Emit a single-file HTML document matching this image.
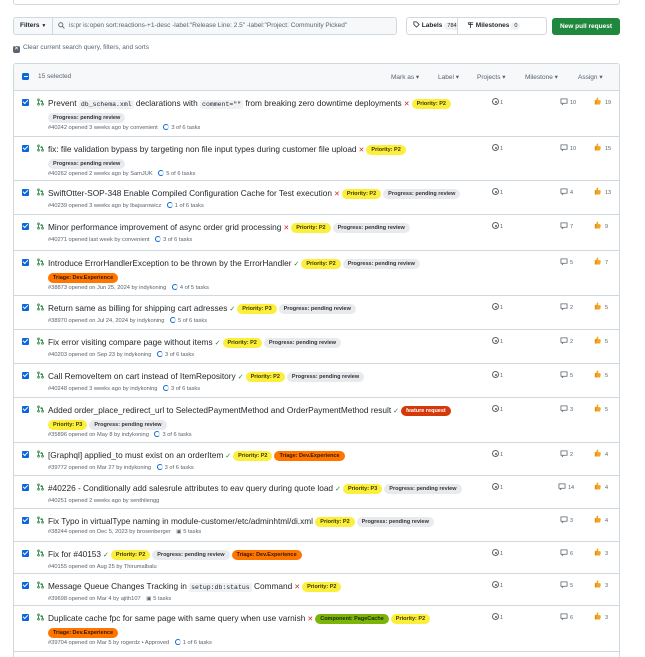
<!DOCTYPE html>
<html><head><meta charset="utf-8"><style>
*{box-sizing:border-box;margin:0;padding:0}
html,body{width:645px;height:657px;overflow:hidden}
body{background:#fff;font-family:"Liberation Sans",Arial,sans-serif;color:#1f2328;position:relative}
.topbox{position:absolute;left:13px;top:-10px;width:607px;height:15px;border:1px solid #d1d9e0;border-radius:3px}
.filters{position:absolute;left:13px;top:17px;height:18px;width:40px;border:1px solid #d1d9e0;border-radius:3px 0 0 3px;background:#f6f8fa;font-size:6.5px;font-weight:bold;line-height:16px;padding-left:6px}
.search{position:absolute;left:53px;top:17px;height:18px;width:344px;border:1px solid #d1d9e0;border-left:none;border-radius:0 3px 3px 0;background:#f6f8fa;font-size:6.5px;color:#59636e;line-height:16px;padding-left:16px;white-space:nowrap;overflow:hidden}
.btn{position:absolute;top:17px;height:18px;border:1px solid #d1d9e0;background:#fff;font-size:6.5px;font-weight:bold;line-height:16px;white-space:nowrap}
.cnt{display:inline-block;background:#eff1f3;border-radius:6px;padding:0 3px;font-size:5.5px;line-height:8px;font-weight:normal;margin-left:2px}
.npr{position:absolute;left:552px;top:18px;width:68px;height:17px;background:#1f883d;border-radius:3px;color:#fff;font-size:6.5px;font-weight:bold;line-height:17px;text-align:center}
.clear{position:absolute;left:13px;top:44px;font-size:6.5px;color:#59636e;line-height:8px}
.clear i{display:inline-block;width:7px;height:7px;background:#59636e;border-radius:2px;color:#fff;font-style:normal;font-size:6px;line-height:7px;text-align:center;vertical-align:-1px;margin-right:3px}
.box{position:absolute;left:13px;top:63px;width:607px;height:594px;border:1px solid #d1d9e0;border-bottom:none;border-radius:3px 3px 0 0;overflow:hidden}
.hdr{position:absolute;left:0;top:0;width:605px;height:27px;background:#f6f8fa;border-bottom:1px solid #d1d9e0}
.hdr .sel{position:absolute;left:24px;top:9px;font-size:6.5px;color:#59636e}
.hdr .mn{position:absolute;left:8px;top:9px;width:7px;height:7px;background:#0969da;border-radius:1.5px}
.hdr .mn:after{content:"";position:absolute;left:1.5px;top:3px;width:4px;height:1px;background:#fff}
.hi{position:absolute;top:9px;font-size:6.5px;color:#59636e;white-space:nowrap}
.row{position:absolute;left:0;width:605px;border-top:1px solid #d1d9e0}
.cb{position:absolute;left:8px;top:8px;width:6.5px;height:6.5px;background:#0969da;border-radius:1px}
.cb:after{content:"";position:absolute;left:1.2px;top:1.2px;width:3.5px;height:2px;border-left:1px solid #fff;border-bottom:1px solid #fff;transform:rotate(-45deg)}
.pr{position:absolute;left:23px;top:7px}
.t{position:absolute;left:34px;top:6px;white-space:nowrap;font-size:8.3px;line-height:12px}
code{font-family:"Liberation Mono",monospace;font-size:6.5px;background:#eff1f3;border-radius:2px;padding:1px 2px}
.x{color:#cf222e;font-size:7px;margin:0 2px}
.ok{color:#1a7f37;font-size:7px;margin:0 2px}
.l{display:inline-block;font-size:5.5px;font-weight:bold;line-height:10px;height:10px;padding:0 5px;border-radius:5px;vertical-align:1px;margin-right:2px}
.p{background:#fbef3c;color:#3b3500}
.g{background:#e8eaee;color:#333}
.o{background:#fe7600;color:#3a1400}
.fr{background:#d5390a;color:#fff}
.c{background:#7cb50a;color:#1c2a00}
.m{display:block;font-size:5.7px;color:#59636e;font-weight:normal;line-height:11px}
.tk{display:inline-block;width:6px;height:6px;border:1.2px solid #0969da;border-right-color:#c6d9f0;border-radius:50%;vertical-align:-1px;margin:0 2px 0 4px}
.iss{position:absolute;left:478px;top:7px;font-size:5.5px;color:#59636e}
.iss i{display:inline-block;width:7px;height:7px;border:1px solid #59636e;border-radius:50%;vertical-align:-1px;position:relative;margin-right:1px}
.iss i:after{content:"";position:absolute;left:1.5px;top:1.5px;width:2px;height:2px;background:#59636e;border-radius:50%}
.com{position:absolute;left:546px;top:7px;font-size:5.5px;color:#59636e}
.com svg{vertical-align:-1px;margin-right:2px}
.th{position:absolute;left:580px;top:6px;font-size:5.5px;color:#59636e}
.th svg{vertical-align:-1px;margin-right:4px}
</style></head><body>
<div class="topbox"></div>
<div class="filters">Filters <span style="font-size:5px">▼</span></div>
<div class="search"><svg style="position:absolute;left:5px;top:4px" width="7" height="7" viewBox="0 0 8 8"><circle cx="3.2" cy="3.2" r="2.4" fill="none" stroke="#59636e" stroke-width="1"/><path d="M5 5l2.3 2.3" stroke="#59636e" stroke-width="1"/></svg>is:pr is:open sort:reactions-+1-desc -label:"Release Line: 2.5" -label:"Project: Community Picked"</div>
<div class="btn" style="left:406px;width:52px;border-radius:3px 0 0 3px;padding-left:6px"><svg width="7" height="7" viewBox="0 0 8 8" style="vertical-align:-1px"><path d="M1 1h3l3 3-3 3-3-3z" fill="none" stroke="#1f2328" stroke-width=".9"/></svg> Labels<span class="cnt">784</span></div>
<div class="btn" style="left:457px;width:90px;border-radius:0 3px 3px 0;padding-left:9px"><svg width="7" height="7" viewBox="0 0 8 8" style="vertical-align:-1px"><path d="M1 2h6M4 2v6M2 2v2h5" fill="none" stroke="#1f2328" stroke-width=".9"/></svg> Milestones<span class="cnt">0</span></div>
<div class="npr">New pull request</div>
<div class="clear"><i>✕</i>Clear current search query, filters, and sorts</div>

<div class="box">
<div class="hdr"><div class="mn"></div><div class="sel">15 selected</div>
<div class="hi" style="left:377px">Mark as ▾</div><div class="hi" style="left:424px">Label ▾</div><div class="hi" style="left:463px">Projects ▾</div><div class="hi" style="left:511px">Milestone ▾</div><div class="hi" style="left:564px">Assign ▾</div></div>

<svg width="0" height="0" style="position:absolute"><defs>
<symbol id="pr" viewBox="0 0 8 8"><circle cx="1.7" cy="1.5" r="1" fill="none" stroke="#1a7f37" stroke-width=".9"/><circle cx="1.7" cy="6.5" r="1" fill="none" stroke="#1a7f37" stroke-width=".9"/><circle cx="6.3" cy="6.5" r="1" fill="none" stroke="#1a7f37" stroke-width=".9"/><path d="M1.7 2.5v3M6.3 5.5V3H4.5M5.3 2l-1 1 1 1" fill="none" stroke="#1a7f37" stroke-width=".9"/></symbol>
<symbol id="cm" viewBox="0 0 9 8"><path d="M1 1h7v5H4L2.5 7.5V6H1z" fill="none" stroke="#59636e" stroke-width=".9"/></symbol>
<symbol id="tu" viewBox="0 0 8 9"><path d="M3.5 0.3L2.5 3.5H1v5h6l.8-3.8L7 3.5H4.5L5 1z" fill="#f4a623"/><path d="M1 3.5h1.8v5H1z" fill="#e28f12"/></symbol>
</defs></svg>

<div class="row" style="top:26px;height:46px"><div class="cb"></div><svg class="pr" width="7" height="8"><use href="#pr"/></svg>
<div class="t">Prevent <code>db_schema.xml</code> declarations with <code>comment=""</code> from breaking zero downtime deployments<span class="x">✕</span><span class="l p">Priority: P2</span><br><span class="l g">Progress: pending review</span><span class="m">#40242 opened 3 weeks ago by convenient <span class="tk"></span>3 of 6 tasks</span></div>
<div class="iss"><i></i>1</div><div class="com"><svg width="8" height="7"><use href="#cm"/></svg>10</div><div class="th"><svg width="7" height="8"><use href="#tu"/></svg>19</div></div>

<div class="row" style="top:72px;height:44px"><div class="cb"></div><svg class="pr" width="7" height="8"><use href="#pr"/></svg>
<div class="t">fix: file validation bypass by targeting non file input types during customer file upload<span class="x">✕</span><span class="l p">Priority: P2</span><br><span class="l g">Progress: pending review</span><span class="m">#40262 opened 2 weeks ago by SamJUK <span class="tk"></span>5 of 6 tasks</span></div>
<div class="iss"><i></i>1</div><div class="com"><svg width="8" height="7"><use href="#cm"/></svg>10</div><div class="th"><svg width="7" height="8"><use href="#tu"/></svg>15</div></div>

<div class="row" style="top:116px;height:34px"><div class="cb"></div><svg class="pr" width="7" height="8"><use href="#pr"/></svg>
<div class="t">SwiftOtter-SOP-348 Enable Compiled Configuration Cache for Test execution<span class="x">✕</span><span class="l p">Priority: P2</span><span class="l g">Progress: pending review</span><span class="m">#40239 opened 3 weeks ago by lbajsarowicz <span class="tk"></span>1 of 6 tasks</span></div>
<div class="iss"><i></i>1</div><div class="com"><svg width="8" height="7"><use href="#cm"/></svg>4</div><div class="th"><svg width="7" height="8"><use href="#tu"/></svg>13</div></div>

<div class="row" style="top:150px;height:36px"><div class="cb"></div><svg class="pr" width="7" height="8"><use href="#pr"/></svg>
<div class="t">Minor performance improvement of async order grid processing<span class="x">✕</span><span class="l p">Priority: P2</span><span class="l g">Progress: pending review</span><span class="m">#40271 opened last week by convenient <span class="tk"></span>3 of 6 tasks</span></div>
<div class="iss"><i></i>1</div><div class="com"><svg width="8" height="7"><use href="#cm"/></svg>7</div><div class="th"><svg width="7" height="8"><use href="#tu"/></svg>9</div></div>

<div class="row" style="top:186px;height:45px"><div class="cb"></div><svg class="pr" width="7" height="8"><use href="#pr"/></svg>
<div class="t">Introduce ErrorHandlerException to be thrown by the ErrorHandler<span class="ok">✓</span><span class="l p">Priority: P2</span><span class="l g">Progress: pending review</span><br><span class="l o">Triage: Dev.Experience</span><span class="m">#38873 opened on Jun 25, 2024 by indykoning <span class="tk"></span>4 of 5 tasks</span></div>
<div class="com"><svg width="8" height="7"><use href="#cm"/></svg>5</div><div class="th"><svg width="7" height="8"><use href="#tu"/></svg>7</div></div>

<div class="row" style="top:231px;height:34px"><div class="cb"></div><svg class="pr" width="7" height="8"><use href="#pr"/></svg>
<div class="t">Return same as billing for shipping cart adresses<span class="ok">✓</span><span class="l p">Priority: P3</span><span class="l g">Progress: pending review</span><span class="m">#38970 opened on Jul 24, 2024 by indykoning <span class="tk"></span>5 of 6 tasks</span></div>
<div class="iss"><i></i>1</div><div class="com"><svg width="8" height="7"><use href="#cm"/></svg>2</div><div class="th"><svg width="7" height="8"><use href="#tu"/></svg>5</div></div>

<div class="row" style="top:265px;height:34px"><div class="cb"></div><svg class="pr" width="7" height="8"><use href="#pr"/></svg>
<div class="t">Fix error visiting compare page without items<span class="ok">✓</span><span class="l p">Priority: P2</span><span class="l g">Progress: pending review</span><span class="m">#40203 opened on Sep 23 by indykoning <span class="tk"></span>3 of 6 tasks</span></div>
<div class="iss"><i></i>1</div><div class="com"><svg width="8" height="7"><use href="#cm"/></svg>2</div><div class="th"><svg width="7" height="8"><use href="#tu"/></svg>5</div></div>

<div class="row" style="top:299px;height:34px"><div class="cb"></div><svg class="pr" width="7" height="8"><use href="#pr"/></svg>
<div class="t">Call RemoveItem on cart instead of ItemRepository<span class="ok">✓</span><span class="l p">Priority: P2</span><span class="l g">Progress: pending review</span><span class="m">#40248 opened 3 weeks ago by indykoning <span class="tk"></span>3 of 6 tasks</span></div>
<div class="iss"><i></i>1</div><div class="com"><svg width="8" height="7"><use href="#cm"/></svg>5</div><div class="th"><svg width="7" height="8"><use href="#tu"/></svg>5</div></div>

<div class="row" style="top:333px;height:45px"><div class="cb"></div><svg class="pr" width="7" height="8"><use href="#pr"/></svg>
<div class="t">Added order_place_redirect_url to SelectedPaymentMethod and OrderPaymentMethod result<span class="ok">✓</span><span class="l fr">feature request</span><br><span class="l p">Priority: P3</span><span class="l g">Progress: pending review</span><span class="m">#35896 opened on May 8 by indykoning <span class="tk"></span>3 of 6 tasks</span></div>
<div class="iss"><i></i>1</div><div class="com"><svg width="8" height="7"><use href="#cm"/></svg>3</div><div class="th"><svg width="7" height="8"><use href="#tu"/></svg>5</div></div>

<div class="row" style="top:378px;height:33px"><div class="cb"></div><svg class="pr" width="7" height="8"><use href="#pr"/></svg>
<div class="t">[Graphql] applied_to must exist on an orderItem<span class="ok">✓</span><span class="l p">Priority: P2</span><span class="l o">Triage: Dev.Experience</span><span class="m">#39772 opened on Mar 27 by indykoning <span class="tk"></span>3 of 6 tasks</span></div>
<div class="iss"><i></i>1</div><div class="com"><svg width="8" height="7"><use href="#cm"/></svg>2</div><div class="th"><svg width="7" height="8"><use href="#tu"/></svg>4</div></div>

<div class="row" style="top:411px;height:33px"><div class="cb"></div><svg class="pr" width="7" height="8"><use href="#pr"/></svg>
<div class="t">#40226 - Conditionally add salesrule attributes to eav query during quote load<span class="ok">✓</span><span class="l p">Priority: P3</span><span class="l g">Progress: pending review</span><span class="m">#40251 opened 2 weeks ago by senthilengg</span></div>
<div class="iss"><i></i>1</div><div class="com" style="left:544px"><svg width="8" height="7"><use href="#cm"/></svg>14</div><div class="th"><svg width="7" height="8"><use href="#tu"/></svg>4</div></div>

<div class="row" style="top:444px;height:33px"><div class="cb"></div><svg class="pr" width="7" height="8"><use href="#pr"/></svg>
<div class="t">Fix Typo in virtualType naming in module-customer/etc/adminhtml/di.xml <span class="l p">Priority: P2</span><span class="l g">Progress: pending review</span><span class="m">#38244 opened on Dec 5, 2023 by brosenberger <span style="margin-left:4px">▣</span> 5 tasks</span></div>
<div class="com"><svg width="8" height="7"><use href="#cm"/></svg>3</div><div class="th"><svg width="7" height="8"><use href="#tu"/></svg>4</div></div>

<div class="row" style="top:477px;height:32px"><div class="cb"></div><svg class="pr" width="7" height="8"><use href="#pr"/></svg>
<div class="t">Fix for #40153<span class="ok">✓</span><span class="l p">Priority: P2</span><span class="l g">Progress: pending review</span><span class="l o">Triage: Dev.Experience</span><span class="m">#40155 opened on Aug 25 by Thirumalbalu</span></div>
<div class="iss"><i></i>1</div><div class="com"><svg width="8" height="7"><use href="#cm"/></svg>6</div><div class="th"><svg width="7" height="8"><use href="#tu"/></svg>3</div></div>

<div class="row" style="top:509px;height:32px"><div class="cb"></div><svg class="pr" width="7" height="8"><use href="#pr"/></svg>
<div class="t">Message Queue Changes Tracking in <code>setup:db:status</code> Command<span class="x">✕</span><span class="l p">Priority: P2</span><span class="m">#39698 opened on Mar 4 by ajith107 <span style="margin-left:4px">▣</span> 5 tasks</span></div>
<div class="iss"><i></i>1</div><div class="com"><svg width="8" height="7"><use href="#cm"/></svg>5</div><div class="th"><svg width="7" height="8"><use href="#tu"/></svg>3</div></div>

<div class="row" style="top:541px;height:46px"><div class="cb"></div><svg class="pr" width="7" height="8"><use href="#pr"/></svg>
<div class="t">Duplicate cache fpc for same page with same query when use varnish<span class="x">✕</span><span class="l c">Component: PageCache</span><span class="l p">Priority: P2</span><br><span class="l o">Triage: Dev.Experience</span><span class="m">#39704 opened on Mar 5 by rogerdz • Approved <span class="tk"></span>1 of 6 tasks</span></div>
<div class="iss"><i></i>1</div><div class="com"><svg width="8" height="7"><use href="#cm"/></svg>6</div><div class="th"><svg width="7" height="8"><use href="#tu"/></svg>3</div></div>

<div class="row" style="top:587px;height:6px"></div>
</div>
</body></html>
